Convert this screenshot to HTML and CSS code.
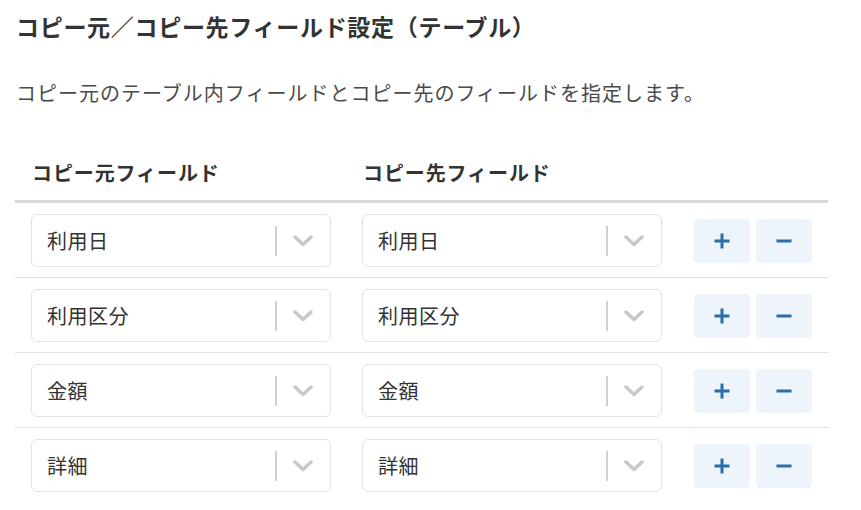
FILE: index.html
```html
<!DOCTYPE html>
<html lang="ja">
<head>
    <meta charset="utf-8">
    <link rel="stylesheet" href="styles.css">
</head>
<body>
    <div class="settings">
        <h1 class="settings-title">コピー元／コピー先フィールド設定（テーブル）</h1>
        <p class="settings-desc">コピー元のテーブル内フィールドとコピー先のフィールドを指定します。</p>

        <div class="field-table">
            <div class="field-head">
                <div class="head-cell">コピー元フィールド</div>
                <div class="head-cell">コピー先フィールド</div>
                <div></div>
            </div>

            <div class="field-row">
                <div class="select"><span class="select-value">利用日</span><span class="select-sep"></span><svg class="select-arrow" viewBox="0 0 20 12"><polyline points="2,2 10,9.5 18,2"/></svg></div>
                <div class="select"><span class="select-value">利用日</span><span class="select-sep"></span><svg class="select-arrow" viewBox="0 0 20 12"><polyline points="2,2 10,9.5 18,2"/></svg></div>
                <div class="row-actions">
                    <button class="icon-btn" title="追加"><svg viewBox="0 0 16 16"><path d="M8 0.5v15M0.5 8h15"/></svg></button>
                    <button class="icon-btn" title="削除"><svg viewBox="0 0 16 16"><path d="M0.5 8h15"/></svg></button>
                </div>
            </div>

            <div class="field-row">
                <div class="select"><span class="select-value">利用区分</span><span class="select-sep"></span><svg class="select-arrow" viewBox="0 0 20 12"><polyline points="2,2 10,9.5 18,2"/></svg></div>
                <div class="select"><span class="select-value">利用区分</span><span class="select-sep"></span><svg class="select-arrow" viewBox="0 0 20 12"><polyline points="2,2 10,9.5 18,2"/></svg></div>
                <div class="row-actions">
                    <button class="icon-btn" title="追加"><svg viewBox="0 0 16 16"><path d="M8 0.5v15M0.5 8h15"/></svg></button>
                    <button class="icon-btn" title="削除"><svg viewBox="0 0 16 16"><path d="M0.5 8h15"/></svg></button>
                </div>
            </div>

            <div class="field-row">
                <div class="select"><span class="select-value">金額</span><span class="select-sep"></span><svg class="select-arrow" viewBox="0 0 20 12"><polyline points="2,2 10,9.5 18,2"/></svg></div>
                <div class="select"><span class="select-value">金額</span><span class="select-sep"></span><svg class="select-arrow" viewBox="0 0 20 12"><polyline points="2,2 10,9.5 18,2"/></svg></div>
                <div class="row-actions">
                    <button class="icon-btn" title="追加"><svg viewBox="0 0 16 16"><path d="M8 0.5v15M0.5 8h15"/></svg></button>
                    <button class="icon-btn" title="削除"><svg viewBox="0 0 16 16"><path d="M0.5 8h15"/></svg></button>
                </div>
            </div>

            <div class="field-row">
                <div class="select"><span class="select-value">詳細</span><span class="select-sep"></span><svg class="select-arrow" viewBox="0 0 20 12"><polyline points="2,2 10,9.5 18,2"/></svg></div>
                <div class="select"><span class="select-value">詳細</span><span class="select-sep"></span><svg class="select-arrow" viewBox="0 0 20 12"><polyline points="2,2 10,9.5 18,2"/></svg></div>
                <div class="row-actions">
                    <button class="icon-btn" title="追加"><svg viewBox="0 0 16 16"><path d="M8 0.5v15M0.5 8h15"/></svg></button>
                    <button class="icon-btn" title="削除"><svg viewBox="0 0 16 16"><path d="M0.5 8h15"/></svg></button>
                </div>
            </div>
        </div>
    </div>
</body>
</html>
```

FILE: styles.css
```css
body {
    margin: 0;
    background-color: #ffffff;
    color: #333333;
    font-family: "Noto Sans CJK JP", "Noto Sans", sans-serif;
}

.settings {
    padding: 10px 15px 0;
}

.settings-title {
    margin: 0 0 0 1px;
    font-size: 23px;
    line-height: 32px;
    font-weight: bold;
    letter-spacing: 0.7px;
}

.settings-desc {
    margin: 36px 0 0 1px;
    font-size: 20px;
    line-height: 30px;
    letter-spacing: 1px;
    color: #4a4a4a;
}

.field-table {
    width: 813px;
    margin-top: 50px;
}

.field-head,
.field-row {
    display: grid;
    grid-template-columns: 300px 300px auto;
    column-gap: 31px;
    padding-left: 16px;
    padding-right: 16px;
}

.field-head {
    padding-bottom: 12px;
    border-bottom: 3px solid #d9d9d9;
}

.head-cell {
    padding-left: 1px;
    font-size: 20px;
    line-height: 30px;
    font-weight: bold;
    letter-spacing: 0.9px;
}

.field-row {
    padding-top: 11px;
    padding-bottom: 10px;
    align-items: center;
}

.field-row + .field-row {
    border-top: 1px solid #e0e0e0;
}

.select {
    display: flex;
    align-items: center;
    height: 53px;
    box-sizing: border-box;
    border: 1px solid #e3e3e3;
    border-radius: 6px;
    background-color: #ffffff;
}

.select-value {
    flex: 1;
    padding-left: 15px;
    font-size: 20px;
    letter-spacing: 0.5px;
}

.select-sep {
    width: 2px;
    height: 30px;
    background-color: #d0d0d0;
}

.select-arrow {
    width: 20px;
    height: 12px;
    margin: 0 17px 0 16px;
    fill: none;
    stroke: #c8c8c8;
    stroke-width: 3.5;
    stroke-linecap: round;
    stroke-linejoin: round;
}

.row-actions {
    display: flex;
    gap: 6px;
    padding-left: 1px;
}

.icon-btn {
    display: flex;
    align-items: center;
    justify-content: center;
    width: 56px;
    height: 44px;
    padding: 0;
    border: none;
    border-radius: 4px;
    background-color: #edf4fb;
    cursor: pointer;
}

.icon-btn svg {
    width: 16px;
    height: 16px;
    fill: none;
    stroke: #2b6ea7;
    stroke-width: 3;
}
```
